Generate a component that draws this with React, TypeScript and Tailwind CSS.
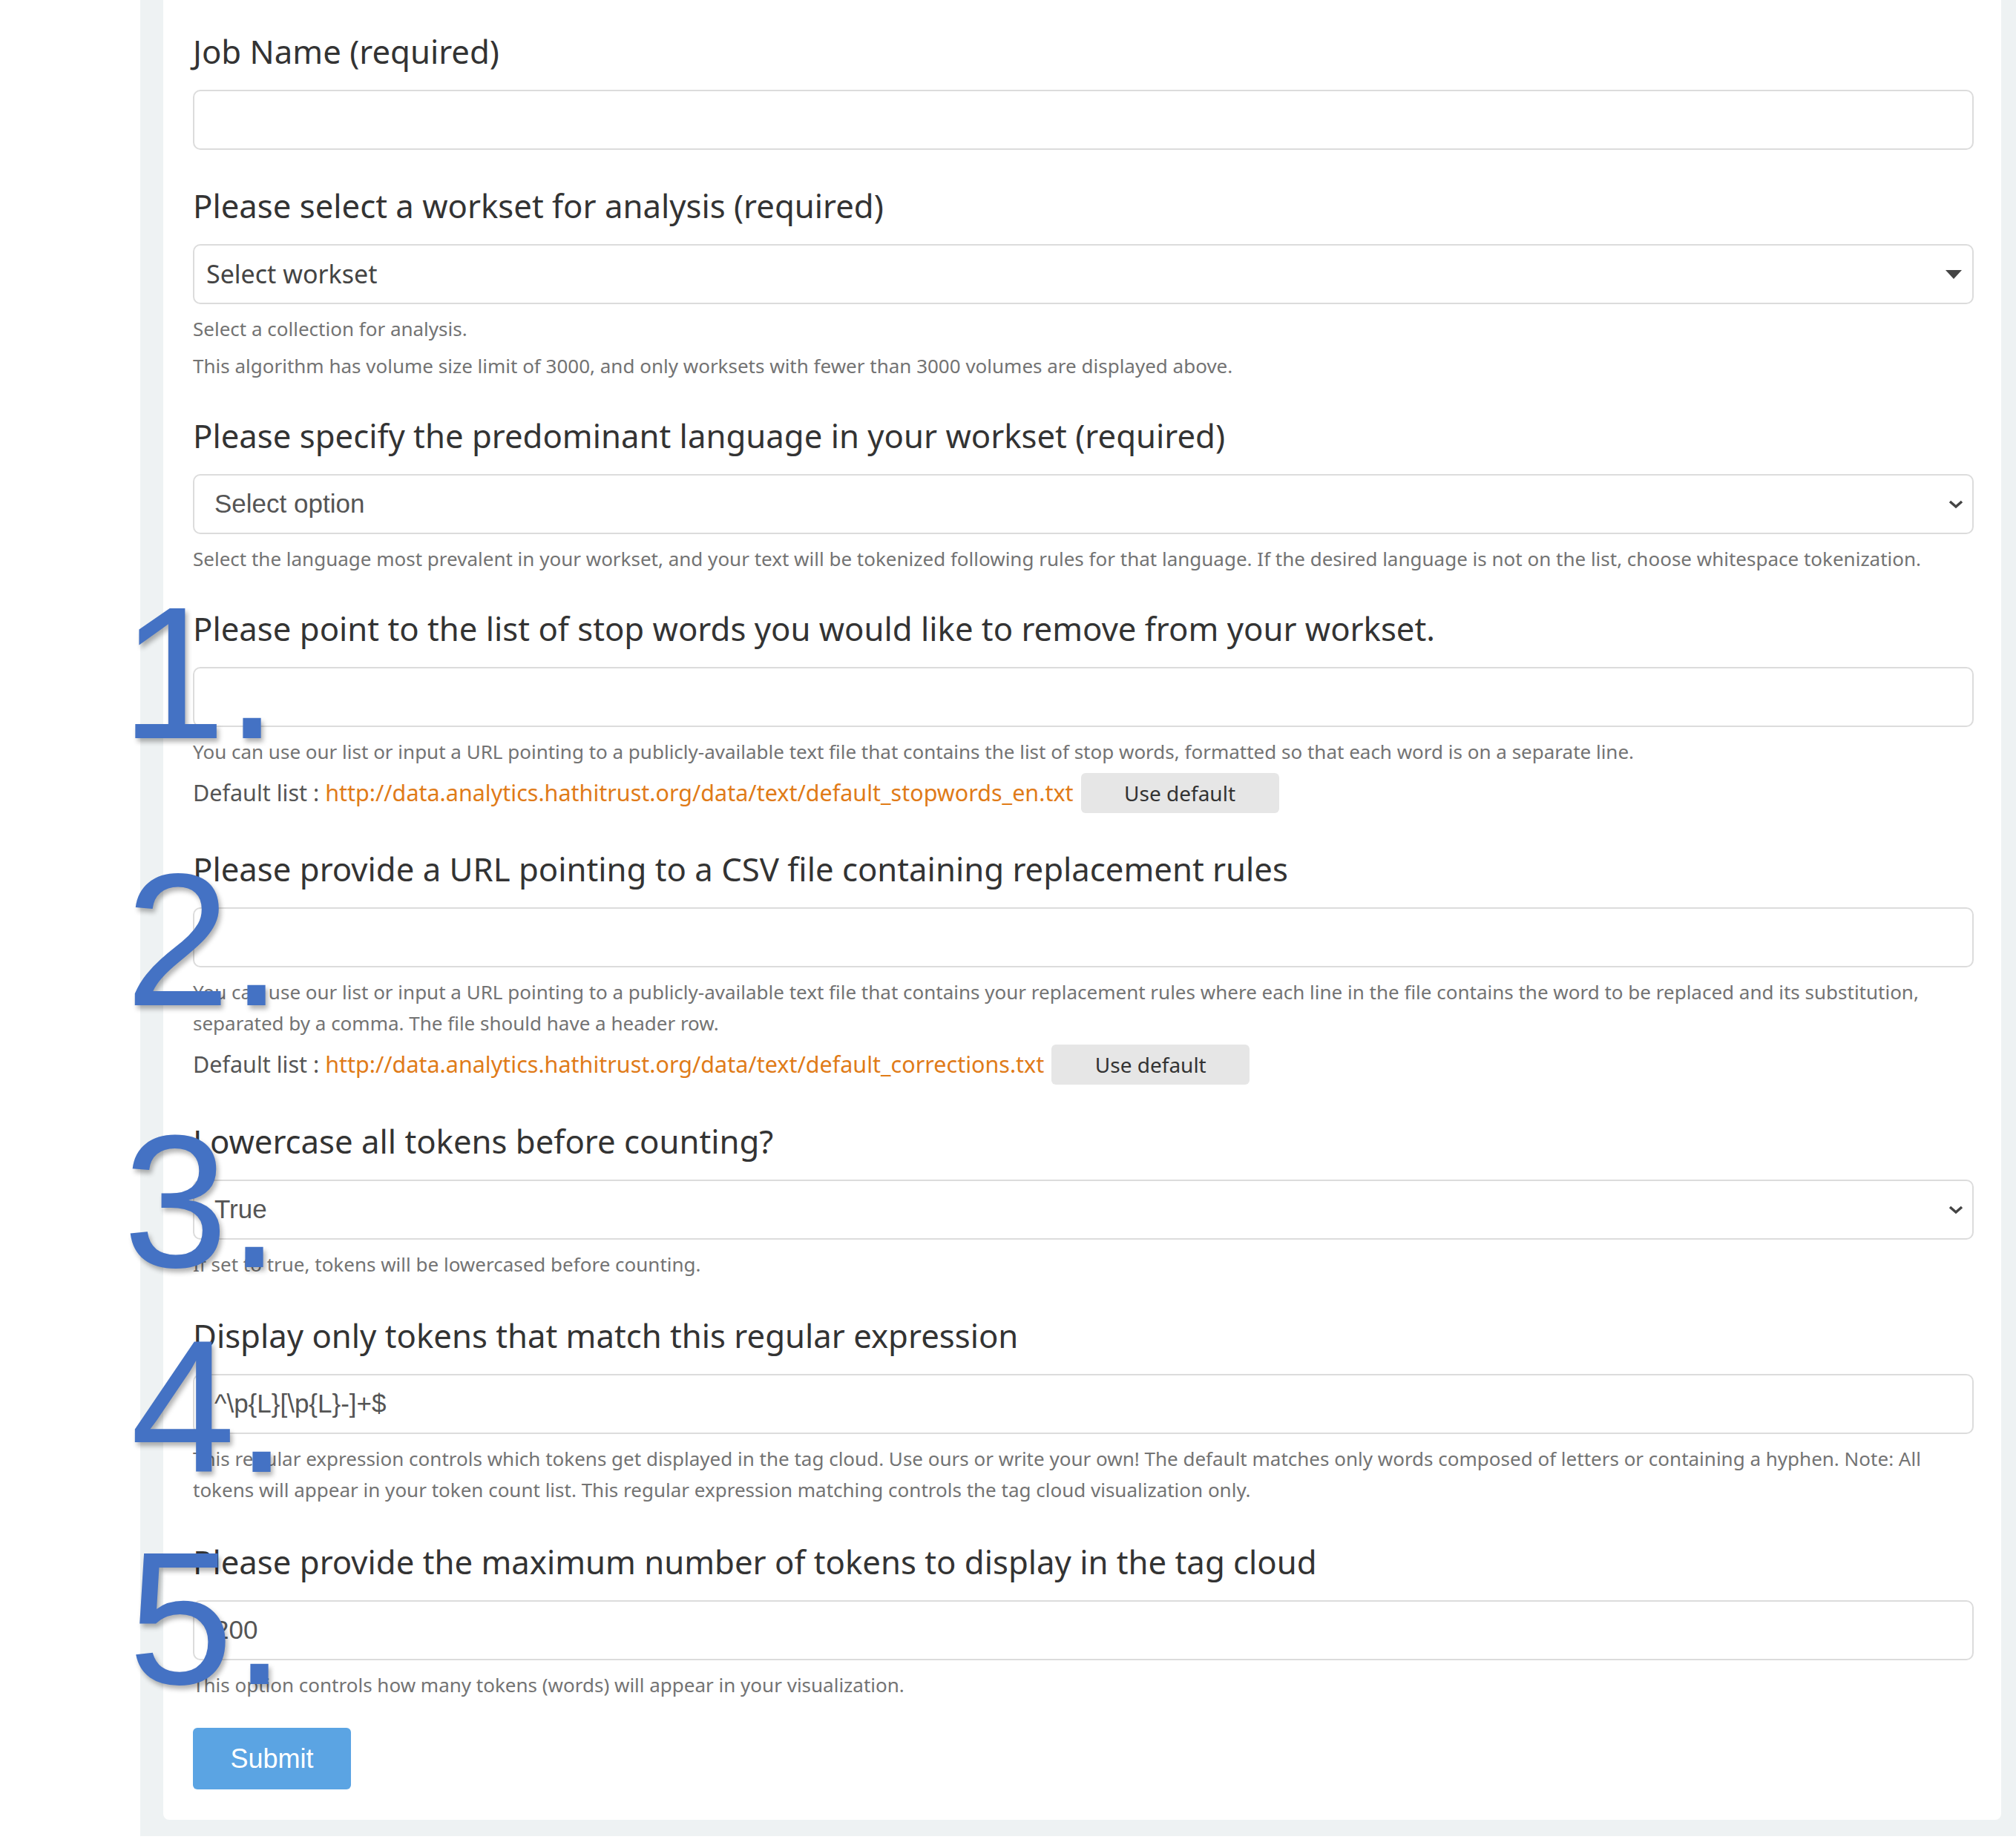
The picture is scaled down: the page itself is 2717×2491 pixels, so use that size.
import { ReactNode } from "react"

const sans = "font-['Noto_Sans','Open_Sans',sans-serif]"
const arial = "font-['Liberation_Sans',Arial,sans-serif]"

const Num = ({ n, className }: { n: string; className: string }) => {
  return (
    <span
      className={`absolute ${arial} text-[254px] leading-none text-[#4472c4] pointer-events-none select-none [text-shadow:3px_5px_6px_rgba(0,0,0,0.3)] ${className}`}
    >
      {n}
    </span>
  )
}

const Label = ({ children }: { children: ReactNode }) => {
  return <label className="block text-[43.7px] leading-[60px] text-[#333] mb-[22px]">{children}</label>
}

const Help = ({ children, first = true }: { children: ReactNode; first?: boolean }) => {
  return (
    <p className={`text-[26px] leading-[42px] text-[#737373] ${first ? "mt-[12px]" : "mt-[8px]"}`}>{children}</p>
  )
}

const TextBox = ({ value }: { value?: string }) => {
  return (
    <div className={`h-[81px] border-2 border-[#dcdcdc] rounded-[10px] bg-white flex items-center pl-[27px] ${arial} text-[35px] text-[#555]`}>
      {value}
    </div>
  )
}

const NativeSelect = ({ value }: { value: string }) => {
  return (
    <div className={`h-[81px] border-2 border-[#dcdcdc] rounded-[10px] bg-white flex items-center justify-between pl-[27px] pr-[12px] ${arial} text-[35px] text-[#555]`}>
      <span>{value}</span>
      <svg width="20" height="12" viewBox="0 0 20 12">
        <polyline points="2,2 10,9 18,2" fill="none" stroke="#444" strokeWidth="3.5" />
      </svg>
    </div>
  )
}

const DefaultRow = ({ url }: { url: string }) => {
  return (
    <div className="flex items-center mt-[8px]">
      <span className="text-[30.5px] text-[#555] whitespace-pre">Default list : </span>
      <a className="text-[30.5px] text-[#e07b18]">{url}</a>
      <button className="ml-[10px] h-[54px] w-[267px] rounded-[6px] bg-[#e6e6e6] text-[28px] text-[#333]">
        Use default
      </button>
    </div>
  )
}

const App = () => {
  return (
    <div className={`bg-white pl-[189px] pb-[16px] ${sans}`}>
      <div className="bg-[#eef2f3] pl-[31px] pr-[20px] pb-[22px]">
        <div className="bg-white rounded-b-[8px] pl-[40px] pr-[37px] pt-[39px] pb-[41px]">
          <div className="mb-[45px]">
            <Label>Job Name (required)</Label>
            <TextBox />
          </div>

          <div className="mb-[43px]">
            <Label>Please select a workset for analysis (required)</Label>
            <div className="h-[81px] border-2 border-[#dcdcdc] rounded-[10px] bg-white flex items-center justify-between pl-[16px] pr-[14px] text-[34px] text-[#444]">
              <span>Select workset</span>
              <svg width="22" height="12" viewBox="0 0 22 12">
                <polygon points="0,0 22,0 11,12" fill="#444" />
              </svg>
            </div>
            <Help>Select a collection for analysis.</Help>
            <Help first={false}>
              This algorithm has volume size limit of 3000, and only worksets with fewer than 3000 volumes are displayed above.
            </Help>
          </div>

          <div className="mb-[43px]">
            <Label>Please specify the predominant language in your workset (required)</Label>
            <NativeSelect value="Select option" />
            <Help>
              Select the language most prevalent in your workset, and your text will be tokenized following rules for that language. If the desired language is not on the list, choose whitespace tokenization.
            </Help>
          </div>

          <div className="relative mb-[45px]">
            <Num n="1." className="top-[-37px] left-[-97px]" />
            <Label>Please point to the list of stop words you would like to remove from your workset.</Label>
            <TextBox />
            <Help>
              You can use our list or input a URL pointing to a publicly-available text file that contains the list of stop words, formatted so that each word is on a separate line.
            </Help>
            <DefaultRow url="http://data.analytics.hathitrust.org/data/text/default_stopwords_en.txt" />
          </div>

          <div className="relative mb-[46px]">
            <Num n="2." className="top-[-1px] left-[-91px]" />
            <Label>Please provide a URL pointing to a CSV file containing replacement rules</Label>
            <TextBox />
            <Help>
              You can use our list or input a URL pointing to a publicly-available text file that contains your replacement rules where each line in the file contains the word to be replaced and its substitution,
              <br />
              separated by a comma. The file should have a header row.
            </Help>
            <DefaultRow url="http://data.analytics.hathitrust.org/data/text/default_corrections.txt" />
          </div>

          <div className="relative mb-[45px]">
            <Num n="3." className="top-[-15px] left-[-94px]" />
            <Label>Lowercase all tokens before counting?</Label>
            <NativeSelect value="True" />
            <Help>If set to true, tokens will be lowercased before counting.</Help>
          </div>

          <div className="relative mb-[46px]">
            <Num n="4." className="top-[-1px] left-[-84px]" />
            <Label>Display only tokens that match this regular expression</Label>
            <TextBox value={"^\\p{L}[\\p{L}-]+$"} />
            <Help>
              This regular expression controls which tokens get displayed in the tag cloud. Use ours or write your own! The default matches only words composed of letters or containing a hyphen. Note: All
              <br />
              tokens will appear in your token count list. This regular expression matching controls the tag cloud visualization only.
            </Help>
          </div>

          <div className="relative">
            <Num n="5." className="top-[-20px] left-[-87px]" />
            <Label>Please provide the maximum number of tokens to display in the tag cloud</Label>
            <TextBox value="200" />
            <Help>This option controls how many tokens (words) will appear in your visualization.</Help>
          </div>

          <button className={`mt-[37px] h-[83px] w-[213px] rounded-[6px] bg-[#5ba4e3] text-white text-[36px] ${arial}`}>
            Submit
          </button>
        </div>
      </div>
    </div>
  )
}

export default App
